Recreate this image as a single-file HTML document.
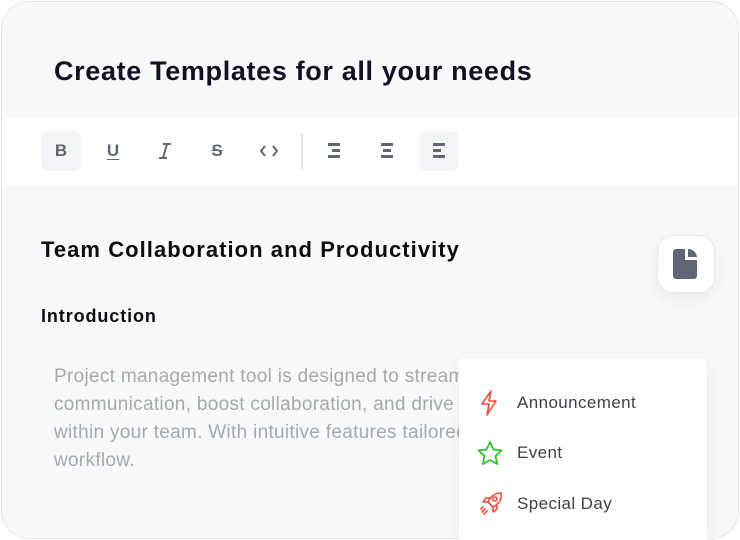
<html><head><style>
html,body{margin:0;width:740px;height:540px;background:#fff;font-family:"Liberation Sans",sans-serif;overflow:hidden;position:relative}
.card{position:absolute;left:1px;top:1px;width:736px;height:536px;border:1px solid #e5e7eb;border-radius:28px;background:#f8f9fb;overflow:hidden}
.t{position:absolute;left:52px;top:54px;font-size:27px;font-weight:bold;color:#0f1222;letter-spacing:0.65px}
.bar{position:absolute;left:0;top:115px;width:740px;height:68px;background:#fff}
.btn{position:absolute;top:14px;width:40px;height:40px;border-radius:8px;display:flex;align-items:center;justify-content:center;color:#5f6678;font-weight:bold;font-size:17px}
.sel{background:#f2f4f7}
.sep{position:absolute;left:299px;top:16px;width:2px;height:36px;background:#e5e7eb}
.h1{position:absolute;left:39px;top:235px;font-size:22px;font-weight:bold;color:#0b0d12;letter-spacing:1.05px}
.h2{position:absolute;left:39px;top:304px;font-size:18px;font-weight:bold;color:#0b0d12;letter-spacing:0.9px}
.p{position:absolute;left:52px;top:361px;font-size:19px;line-height:28px;color:#a5a8b0;white-space:nowrap;letter-spacing:0.3px}
.fb{position:absolute;left:655px;top:233px;width:56px;height:56px;border:1px solid #e6e8ee;border-radius:16px;background:#fff;box-shadow:0 6px 14px rgba(0,0,0,.06);display:flex;align-items:center;justify-content:center}
.menu{position:absolute;left:459px;top:358px;width:248px;height:182px;background:#fff;border-radius:6px 6px 0 0;box-shadow:0 4px 16px rgba(0,0,0,.06)}
.it{position:absolute;left:20px;display:flex;align-items:center;font-size:17px;color:#3e4149;letter-spacing:0.4px}
.it svg{position:absolute;left:0}
.it span{position:absolute;left:38px;white-space:nowrap}
</style></head><body>
<div class="card">
<div class="t">Create Templates for all your needs</div>
<div class="bar">
<div class="btn sel" style="left:39px">B</div>
<div class="btn" style="left:91px"><span style="text-decoration:underline;text-underline-offset:3px">U</span></div>
<div class="btn" style="left:143px"><svg width="14" height="18"><path d="M5 2h8M1 16h8M9 2L5 16" stroke="#5f6678" stroke-width="2" fill="none"/></svg></div>
<div class="btn" style="left:195px"><span style="text-decoration:line-through">S</span></div>
<div class="btn" style="left:247px"><svg width="20" height="14"><path d="M6 2L2 7l4 5M14 2l4 5-4 5" stroke="#5f6678" stroke-width="2" fill="none"/></svg></div>
<div class="sep"></div>
<div class="btn" style="left:313px"><svg width="14" height="16"><rect x="0" y="0" width="12" height="3" fill="#5f6678"/><rect x="4" y="6" width="8" height="3" fill="#5f6678"/><rect x="0" y="12" width="12" height="3" fill="#5f6678"/></svg></div>
<div class="btn" style="left:365px"><svg width="14" height="16"><rect x="1" y="0" width="12" height="3" fill="#5f6678"/><rect x="3" y="6" width="8" height="3" fill="#5f6678"/><rect x="1" y="12" width="12" height="3" fill="#5f6678"/></svg></div>
<div class="btn sel" style="left:417px"><svg width="14" height="16"><rect x="1" y="0" width="12" height="3" fill="#5f6678"/><rect x="1" y="6" width="8" height="3" fill="#5f6678"/><rect x="1" y="12" width="12" height="3" fill="#5f6678"/></svg></div>
</div>
<div class="h1">Team Collaboration and Productivity</div>
<div class="h2">Introduction</div>
<div class="p">Project management tool is designed to streamline<br>communication, boost collaboration, and drive productivity<br>within your team. With intuitive features tailored to your<br>workflow.</div>
<div class="fb"><svg width="26" height="30"><path d="M3 0h9v11h12v16a3 3 0 0 1-3 3H3a3 3 0 0 1-3-3V3a3 3 0 0 1 3-3z" fill="#5f6678"/><path d="M15 0a9 9 0 0 1 9 8h-9z" fill="#5f6678"/></svg></div>
</div>
<div class="menu">
<div class="it" style="top:45px"><svg width="20" height="26" viewBox="0 0 20 26" style="top:-13px"><path d="M12 1L3 14h7l-2 11 9-14h-7z" stroke="#f04a3a" stroke-width="1.6" fill="none" stroke-linejoin="round"/></svg><span style="top:-10px">Announcement</span></div>
<div class="it" style="top:95px"><svg width="26" height="24" viewBox="0 0 26 24" style="top:-12px;left:-2px"><path d="M13 1l3.5 7.5 8 1-6 5.5 1.7 8L13 19l-7.2 4 1.7-8-6-5.5 8-1z" stroke="#2fc22a" stroke-width="1.8" fill="none" stroke-linejoin="round"/></svg><span style="top:-10px">Event</span></div>
<div class="it" style="top:146px"><svg width="26" height="26" viewBox="0 0 26 26" style="top:-13px"><path d="M22 2c-6 0-10 3-13 9l5 5c6-3 9-7 8-14zM9 11H4l3-4h5M14 16v5l4-3v-5M6 18l-3 3M8 20l-3 3M4 16l-2 2" stroke="#f04a3a" stroke-width="1.6" fill="none" stroke-linejoin="round" stroke-linecap="round"/><circle cx="16" cy="8" r="2" stroke="#f04a3a" stroke-width="1.5" fill="none"/></svg><span style="top:-10px">Special Day</span></div>
</div>
</body></html>
